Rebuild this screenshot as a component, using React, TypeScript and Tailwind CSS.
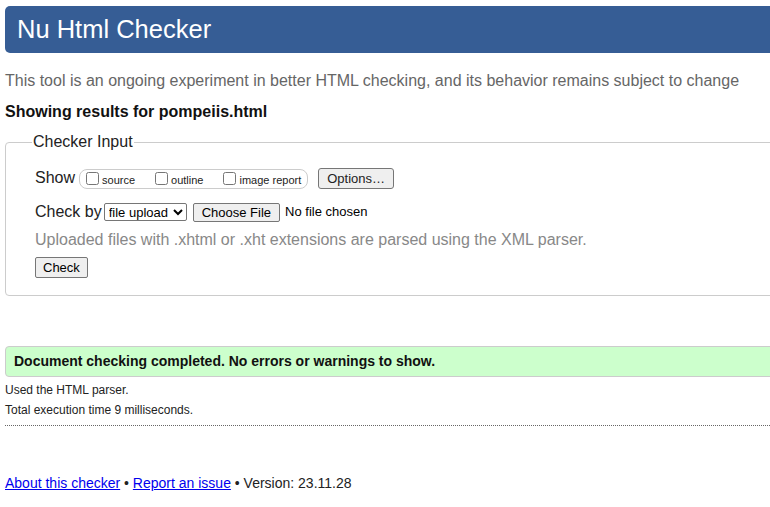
export default function App() {
  return (
    <div className="w-[770px] h-[507px] overflow-hidden bg-white" style={{ fontFamily: '"Liberation Sans", Arial, sans-serif' }}>
      <div className="w-[800px] pl-[5px] pt-[6px]">
        {/* header */}
        <div className="h-[47px] bg-[#365d95] rounded-[5px] flex items-center pl-[12px]">
          <h1 className="text-[25.5px] text-white leading-none">Nu Html Checker</h1>
        </div>

        <p className="mt-[18px] text-[16px] leading-[20px] text-[#666]">
          This tool is an ongoing experiment in better HTML checking, and its behavior remains subject to change
        </p>
        <p className="mt-[11px] text-[16px] leading-[20px] font-bold text-[#111]">Showing results for pompeiis.html</p>

        {/* checker input */}
        <fieldset className="mt-[8px] border border-[#ccc] rounded-[4px] pl-[29px] pb-[16px] pt-[12px] min-w-0">
          <legend className="text-[16px] text-[#222] px-[1px] ml-[-3px]">Checker Input</legend>
          <div className="flex items-center h-[24px] text-[#222]">
            <span className="text-[16px] mr-[4px]">Show</span>
            <div className="flex items-center border border-[#ccc] rounded-[8px] h-[20px] pl-[6px] pr-[6px] mt-[1px]">
              <label className="flex items-center text-[11px] mr-[20px]">
                <input type="checkbox" className="w-[13px] h-[13px] m-0 mr-[3px]" />
                <span className="mt-[3px]">source</span>
              </label>
              <label className="flex items-center text-[11px] mr-[20px]">
                <input type="checkbox" className="w-[13px] h-[13px] m-0 mr-[3px]" />
                <span className="mt-[3px]">outline</span>
              </label>
              <label className="flex items-center text-[11px]">
                <input type="checkbox" className="w-[13px] h-[13px] m-0 mr-[3px]" />
                <span className="mt-[3px]">image report</span>
              </label>
            </div>
            <button className="ml-[10px] h-[21px] px-[8px] text-[13px] border border-[#767676] rounded-[3px] bg-[#efefef] leading-none">Options…</button>
          </div>
          <div className="flex items-center mt-[12px] text-[#222] h-[20px]">
            <span className="text-[16px] mr-[2px]">Check by</span>
            <select className="w-[83px] h-[18px] text-[13px] border border-[#767676] rounded-[2px] bg-white px-0 text-black" defaultValue="file">
              <option value="file">file upload</option>
            </select>
            <button className="ml-[6px] h-[19px] px-[8px] text-[13px] border border-[#767676] rounded-[2px] bg-[#efefef] leading-none text-black">Choose File</button>
            <span className="ml-[5px] text-[13px] text-black">No file chosen</span>
          </div>
          <p className="mt-[8px] text-[16px] leading-[20px] text-[#888]">Uploaded files with .xhtml or .xht extensions are parsed using the XML parser.</p>
          <button className="mt-[7px] h-[21px] px-[7px] text-[13px] border border-[#767676] rounded-[2px] bg-[#efefef] leading-none text-black">Check</button>
        </fieldset>

        {/* result */}
        <div className="mt-[50px] h-[31px] bg-[#ccffcc] border border-[#ccc] rounded-[4px] flex items-center pl-[8px]">
          <span className="text-[14px] font-bold text-[#111]">Document checking completed. No errors or warnings to show.</span>
        </div>
        <p className="mt-[3px] text-[12px] leading-[20px] text-[#222]">Used the HTML parser.</p>
        <p className="text-[12px] leading-[20px] text-[#222]">Total execution time 9 milliseconds.</p>
        <div className="mt-[5px] border-t border-dotted border-[#666]" />

        <p className="mt-[47px] text-[14px] text-[#222]">
          <a href="#" className="text-[#00e] underline">About this checker</a>
          {' • '}
          <a href="#" className="text-[#00e] underline">Report an issue</a>
          {' • Version: 23.11.28'}
        </p>
      </div>
    </div>
  )
}
